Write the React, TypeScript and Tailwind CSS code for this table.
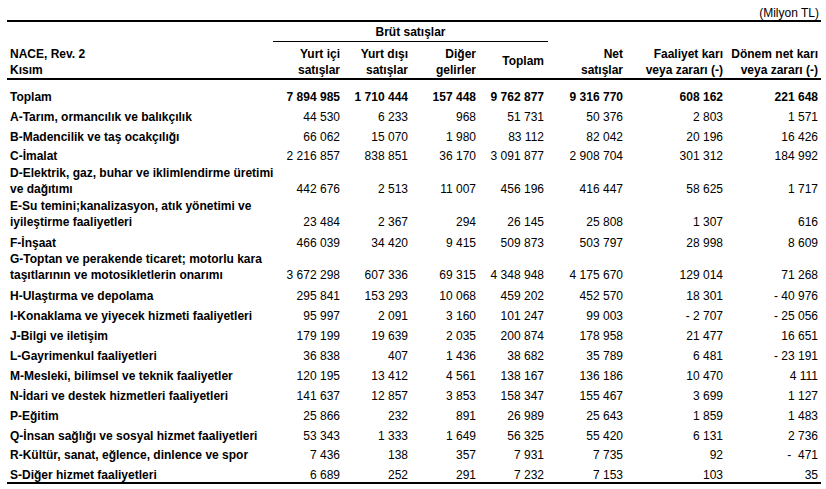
import React from "react";

type Row = { label: string[]; vals: string[]; h: number; bold?: boolean };

const rows: Row[] = [
  { label: ["Toplam"], vals: ["7 894 985", "1 710 444", "157 448", "9 762 877", "9 316 770", "608 162", "221 648"], h: 24, bold: true },
  { label: ["A-Tarım, ormancılık ve balıkçılık"], vals: ["44 530", "6 233", "968", "51 731", "50 376", "2 803", "1 571"], h: 20 },
  { label: ["B-Madencilik ve taş ocakçılığı"], vals: ["66 062", "15 070", "1 980", "83 112", "82 042", "20 196", "16 426"], h: 20 },
  { label: ["C-İmalat"], vals: ["2 216 857", "838 851", "36 170", "3 091 877", "2 908 704", "301 312", "184 992"], h: 19 },
  { label: ["D-Elektrik, gaz, buhar ve iklimlendirme üretimi", "ve dağıtımı"], vals: ["442 676", "2 513", "11 007", "456 196", "416 447", "58 625", "1 717"], h: 33 },
  { label: ["E-Su temini;kanalizasyon, atık yönetimi ve", "iyileştirme faaliyetleri"], vals: ["23 484", "2 367", "294", "26 145", "25 808", "1 307", "616"], h: 33 },
  { label: ["F-İnşaat"], vals: ["466 039", "34 420", "9 415", "509 873", "503 797", "28 998", "8 609"], h: 21 },
  { label: ["G-Toptan ve perakende ticaret; motorlu kara", "taşıtlarının ve motosikletlerin onarımı"], vals: ["3 672 298", "607 336", "69 315", "4 348 948", "4 175 670", "129 014", "71 268"], h: 32 },
  { label: ["H-Ulaştırma ve depolama"], vals: ["295 841", "153 293", "10 068", "459 202", "452 570", "18 301", "- 40 976"], h: 21 },
  { label: ["I-Konaklama ve yiyecek hizmeti faaliyetleri"], vals: ["95 997", "2 091", "3 160", "101 247", "99 003", "- 2 707", "- 25 056"], h: 20 },
  { label: ["J-Bilgi ve iletişim"], vals: ["179 199", "19 639", "2 035", "200 874", "178 958", "21 477", "16 651"], h: 20 },
  { label: ["L-Gayrimenkul faaliyetleri"], vals: ["36 838", "407", "1 436", "38 682", "35 789", "6 481", "- 23 191"], h: 20 },
  { label: ["M-Mesleki, bilimsel ve teknik faaliyetler"], vals: ["120 195", "13 412", "4 561", "138 167", "136 186", "10 470", "4 111"], h: 20 },
  { label: ["N-İdari ve destek hizmetleri faaliyetleri"], vals: ["141 637", "12 857", "3 853", "158 347", "155 467", "3 699", "1 127"], h: 20 },
  { label: ["P-Eğitim"], vals: ["25 866", "232", "891", "26 989", "25 643", "1 859", "1 483"], h: 20 },
  { label: ["Q-İnsan sağlığı ve sosyal hizmet faaliyetleri"], vals: ["53 343", "1 333", "1 649", "56 325", "55 420", "6 131", "2 736"], h: 20 },
  { label: ["R-Kültür, sanat, eğlence, dinlence ve spor"], vals: ["7 436", "138", "357", "7 931", "7 735", "92", "-  471"], h: 19 },
  { label: ["S-Diğer hizmet faaliyetleri"], vals: ["6 689", "252", "291", "7 232", "7 153", "103", "35"], h: 20 },
];

const cols = "grid grid-cols-[266px_71px_68px_68px_68px_79px_100px_94px]";

export default function App() {
  return (
    <div
      className="w-[826px] h-[489px] bg-white text-black text-[12px] pl-[7px]"
      style={{ fontFamily: '"Liberation Sans", Arial, sans-serif' }}
    >
      <div className="w-[814px]">
        <div className="h-[20px] flex items-end justify-end pr-[2px] leading-[14px]">(Milyon TL)</div>
        <div className="h-[2px] bg-black" />
        {/* header */}
        <div className={`${cols} grid-rows-[20px_36px] font-bold leading-[16px]`}>
          <div className="row-span-2 col-start-1 row-start-1 flex flex-col justify-end pl-[3px]">
            <div>NACE, Rev. 2</div>
            <div>Kısım</div>
          </div>
          <div className="col-start-2 col-span-4 row-start-1 border-b border-black flex items-center justify-center">
            Brüt satışlar
          </div>
          <div className="col-start-2 row-start-2 flex flex-col justify-end items-end pr-1">
            <div>Yurt içi</div>
            <div>satışlar</div>
          </div>
          <div className="col-start-3 row-start-2 flex flex-col justify-end items-end pr-1">
            <div>Yurt dışı</div>
            <div>satışlar</div>
          </div>
          <div className="col-start-4 row-start-2 flex flex-col justify-end items-end pr-1">
            <div>Diğer</div>
            <div>gelirler</div>
          </div>
          <div className="col-start-5 row-start-2 flex items-center justify-end pr-1 pt-[2px]">Toplam</div>
          <div className="col-start-6 row-start-1 row-span-2 flex flex-col justify-end items-end pr-1">
            <div>Net</div>
            <div>satışlar</div>
          </div>
          <div className="col-start-7 row-start-1 row-span-2 flex flex-col justify-end items-end pr-1">
            <div>Faaliyet karı</div>
            <div>veya zararı (-)</div>
          </div>
          <div className="col-start-8 row-start-1 row-span-2 flex flex-col justify-end items-end pr-[3px]">
            <div>Dönem net karı</div>
            <div>veya zararı (-)</div>
          </div>
        </div>
        <div className="h-[2px] bg-black" />
        {/* body */}
        {rows.map((r, i) => (
          <div key={i} className={`${cols} leading-[14px]`} style={{ height: r.h }}>
            <div className="flex flex-col justify-end pl-[3px] font-bold">
              {r.label.length > 1 ? (
                <div className="leading-[16px] mb-[-1px]">
                  {r.label.map((l, j) => (
                    <div key={j} className="whitespace-nowrap">{l}</div>
                  ))}
                </div>
              ) : (
                <div className="whitespace-nowrap">{r.label[0]}</div>
              )}
            </div>
            {r.vals.map((v, j) => (
              <div
                key={j}
                className={`flex items-end justify-end whitespace-pre ${j === 6 ? "pr-[3px]" : "pr-1"} ${r.bold ? "font-bold" : ""}`}
              >
                {v}
              </div>
            ))}
          </div>
        ))}
        <div className="h-[2px] bg-black" />
      </div>
    </div>
  );
}
